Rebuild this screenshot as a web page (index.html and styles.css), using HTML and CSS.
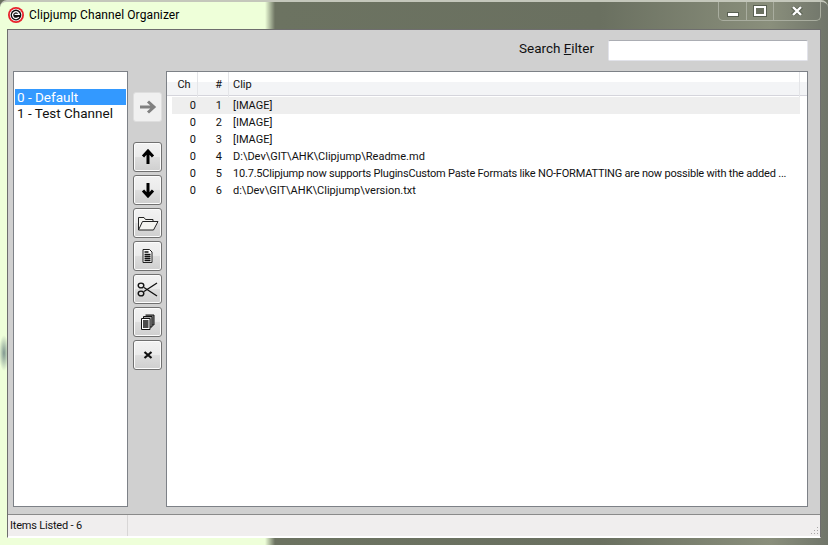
FILE: index.html
```html
<!DOCTYPE html>
<html lang="en">
<head>
    <meta charset="UTF-8">
    <title>Clipjump Channel Organizer</title>
    <link rel="stylesheet" href="styles.css">
</head>
<body>
    <div class="window">
        <div class="titlebar">
            <svg class="app-icon" width="16" height="16" viewBox="0 0 16 16">
                <circle cx="8" cy="8" r="8" fill="#e8222c"/>
                <circle cx="8" cy="8" r="6.2" fill="#fff"/>
                <circle cx="8" cy="8" r="5.4" fill="#111"/>
                <path d="M10.8 10A3.4 3.4 0 1 1 11.3 7.4H6.6" fill="none" stroke="#fff" stroke-width="1.3"/>
            </svg>
            <span class="title">Clipjump Channel Organizer</span>
            <div class="caption-buttons">
                <div class="cap-btn cap-min"><span class="min-bar"></span></div>
                <div class="cap-btn cap-max"><span class="max-box"></span></div>
                <div class="cap-btn cap-close">
                    <svg width="12" height="10" viewBox="0 0 12 10">
                        <path d="M1.5 1L10.5 9M10.5 1L1.5 9" stroke="#596052" stroke-width="4"/>
                        <path d="M2 1L10 9M10 1L2 9" stroke="#fff" stroke-width="2.4"/>
                    </svg>
                </div>
            </div>
        </div>

        <div class="client">
            <div class="search-row">
                <label class="search-label">Search <u>F</u>ilter</label>
                <input type="text" class="search-input">
            </div>

            <div class="main">
                <div class="channel-list">
                    <div class="channel selected">0 - Default</div>
                    <div class="channel">1 - Test Channel</div>
                </div>

                <div class="tools">
                    <button class="tool disabled">
                        <svg width="18" height="14" viewBox="0 0 18 14"><path d="M1 7H14M9 1.5L15 7L9 12.5" fill="none" stroke="#808080" stroke-width="3"/></svg>
                    </button>
                    <div class="spacer"></div>
                    <button class="tool">
                        <svg width="14" height="16" viewBox="0 0 14 16"><path d="M7 15V3M2 7.5L7 2L12 7.5" fill="none" stroke="#000" stroke-width="3"/></svg>
                    </button>
                    <button class="tool">
                        <svg width="14" height="16" viewBox="0 0 14 16"><path d="M7 1V13M2 8.5L7 14L12 8.5" fill="none" stroke="#000" stroke-width="3"/></svg>
                    </button>
                    <button class="tool">
                        <svg width="22" height="15" viewBox="0 0 22 15"><path d="M1.5 14V1.5H7L8.5 3.5H16V5.5M1.5 14L5.5 5.5H21L16.5 14Z" fill="#f4f4f0" stroke="#222" stroke-width="1"/></svg>
                    </button>
                    <button class="tool">
                        <svg width="11" height="14" viewBox="0 0 11 14"><path d="M1 .5H7.5L10 3V13.5H1Z" fill="#fff" stroke="#222"/><path d="M2.5 3H6.5M2.5 5.5H8.5M2.5 7.5H8.5M2.5 9.5H8.5M2.5 11.5H8.5" stroke="#111" stroke-width="1.3"/></svg>
                    </button>
                    <button class="tool">
                        <svg width="21" height="17" viewBox="0 0 21 17"><path d="M7 6.5L20 15M7 10.5L20 2" stroke="#111" stroke-width="1.3"/><ellipse cx="4" cy="4.5" rx="2.8" ry="2.4" fill="none" stroke="#111" stroke-width="1.4"/><ellipse cx="4" cy="12.5" rx="2.8" ry="2.4" fill="none" stroke="#111" stroke-width="1.4"/></svg>
                    </button>
                    <button class="tool">
                        <svg width="14" height="16" viewBox="0 0 14 16"><path d="M4.5 1H13V11H10" fill="#888" stroke="#111"/><path d="M2.5 2.5H11V13H2.5Z" fill="#aaa" stroke="#111"/><path d="M.5 4.5H9V15.5H.5Z" fill="#fff" stroke="#111"/><path d="M2 7H7.5M2 9H7.5M2 11H7.5M2 13H7.5" stroke="#111" stroke-width="1.3"/></svg>
                    </button>
                    <button class="tool">
                        <svg width="10" height="8" viewBox="0 0 10 8"><path d="M1.5 1L8.5 7M8.5 1L1.5 7" stroke="#111" stroke-width="2.2"/></svg>
                    </button>
                </div>

                <div class="clips">
                    <div class="clips-head">
                        <div class="head-cell head-ch">Ch</div>
                        <div class="head-cell head-num">#</div>
                        <div class="head-cell head-clip">Clip</div>
                    </div>
                    <div class="clip-rows">
                        <div class="clip-row focused"><span class="col-ch">0</span><span class="col-num">1</span><span class="col-clip">[IMAGE]</span></div>
                        <div class="clip-row"><span class="col-ch">0</span><span class="col-num">2</span><span class="col-clip">[IMAGE]</span></div>
                        <div class="clip-row"><span class="col-ch">0</span><span class="col-num">3</span><span class="col-clip">[IMAGE]</span></div>
                        <div class="clip-row"><span class="col-ch">0</span><span class="col-num">4</span><span class="col-clip">D:\Dev\GIT\AHK\Clipjump\Readme.md</span></div>
                        <div class="clip-row"><span class="col-ch">0</span><span class="col-num">5</span><span class="col-clip long">10.7.5Clipjump now supports PluginsCustom Paste Formats like NO-FORMATTING are now possible with the added ...</span></div>
                        <div class="clip-row"><span class="col-ch">0</span><span class="col-num">6</span><span class="col-clip">d:\Dev\GIT\AHK\Clipjump\version.txt</span></div>
                    </div>
                </div>
            </div>

            <div class="statusbar">
                <div class="status-cell">Items Listed - 6</div>
                <div class="status-rest">
                    <svg class="grip" width="9" height="9" viewBox="0 0 9 9"><path d="M7 1h1v1H7zM4 4h1v1H4zM7 4h1v1H7zM1 7h1v1H1zM4 7h1v1H4zM7 7h1v1H7z" fill="#a8a6a6"/></svg>
                </div>
            </div>
        </div>
    </div>
</body>
</html>
```

FILE: styles.css
```css
* {
    box-sizing: border-box;
}
body {
    margin: 0;
    background-color: #6a7060;
    font-family: Roboto, "Noto Sans", sans-serif;
    color: #111;
    overflow: hidden;
}
.window {
    width: 828px;
    height: 545px;
    display: flex;
    flex-direction: column;
    border-radius: 7px 7px 0 0;
    border-top: 2px solid #c4c7bb;
    background:
        radial-gradient(ellipse 5px 18px at 4px 351px, #80978f 0%, rgba(128, 151, 143, 0) 100%),
        linear-gradient(90deg, #eeffd9 0, #eeffd9 265px, #6c7361 275px, #6a7060 600px, #8a8f7c 770px, #70756a 828px);
}
.titlebar {
    height: 27px;
    flex: none;
    display: flex;
    align-items: flex-start;
    padding-left: 8px;
}
.app-icon {
    margin-top: 5px;
}
.title {
    margin-left: 5px;
    margin-top: 5px;
    font-size: 12px;
    letter-spacing: 0.1px;
    line-height: 17px;
    color: #000;
}
.caption-buttons {
    margin-left: auto;
    margin-right: 7px;
    width: 103px;
    height: 19px;
    display: flex;
    border: 1px solid #a9ad9f;
    border-top: none;
    border-radius: 0 0 5px 5px;
}
.cap-btn {
    display: flex;
    align-items: center;
    justify-content: center;
    border-right: 1px solid #a9ad9f;
}
.cap-min {
    width: 28px;
    padding-top: 6px;
}
.cap-max {
    width: 27px;
}
.cap-close {
    flex: 1;
    border-right: none;
}
.min-bar {
    width: 12px;
    height: 5px;
    background-color: #fff;
    border: 1px solid #596052;
    background-clip: padding-box;
}
.max-box {
    width: 12px;
    height: 10px;
    border: 2px solid #fff;
    outline: 1px solid #596052;
    background-color: #6b7161;
}
.client {
    flex: 1;
    margin: 0 7px 7px;
    display: flex;
    flex-direction: column;
    background-color: #d0d0d0;
    border: 1px solid #6e6e6e;
    border-bottom-color: #fff;
    min-height: 0;
}
.search-row {
    height: 41px;
    flex: none;
    display: flex;
    align-items: flex-start;
    justify-content: flex-end;
    padding: 10px 12px 0 0;
}
.search-label {
    font-size: 13.5px;
    line-height: 17px;
    margin-right: 14px;
}
.search-input {
    width: 200px;
    height: 21px;
    border: 1px solid #e2e3ea;
    border-top-color: #abadb3;
    border-radius: 2px;
    background-color: #fff;
    padding: 0;
}
.main {
    flex: 1;
    display: flex;
    padding: 0 12px 7px 5px;
    min-height: 0;
}
.channel-list {
    width: 115px;
    background-color: #fff;
    border: 1px solid #7d8187;
    padding: 17px 1px 0;
}
.channel {
    height: 16px;
    font-size: 13.5px;
    line-height: 17px;
    padding-left: 2px;
    white-space: nowrap;
}
.channel.selected {
    background-color: #3399ff;
    color: #fff;
}
.tools {
    width: 29px;
    margin: 0 4px 0 5px;
    padding-top: 21px;
    display: flex;
    flex-direction: column;
    gap: 3px;
}
.spacer {
    height: 14px;
}
.tool {
    width: 29px;
    height: 30px;
    padding: 0;
    display: flex;
    align-items: center;
    justify-content: center;
    border: 1px solid #707070;
    border-radius: 3px;
    box-shadow: inset 0 0 0 1px #fcfcfc;
    background: linear-gradient(#f2f2f2 0, #ebebeb 48%, #dddddd 52%, #cfcfcf 100%);
}
.tool.disabled {
    border-color: #dedede;
    background: #f0f0f0;
    box-shadow: none;
}
.clips {
    flex: 1;
    background-color: #fff;
    border: 1px solid #7d8187;
    display: flex;
    flex-direction: column;
    min-width: 0;
}
.clips-head {
    height: 24px;
    flex: none;
    display: grid;
    grid-template-columns: 31px 31px 571px 1fr;
    background: linear-gradient(#fff 0, #fff 10px, #f3f4f6 10px, #f3f4f6 100%);
    border-bottom: 1px solid #d5d5dc;
    font-size: 11px;
}
.head-cell {
    line-height: 26px;
    border-right: 1px solid #e4e5e8;
}
.head-ch {
    text-align: center;
    padding-left: 4px;
}
.head-num {
    text-align: right;
    padding-right: 6px;
}
.head-clip {
    padding-left: 4px;
}
.clip-rows {
    padding: 1px 7px 0 5px;
}
.clip-row {
    height: 17px;
    display: grid;
    grid-template-columns: 25px 31px 1fr;
    font-size: 11px;
    line-height: 18px;
    white-space: nowrap;
}
.clip-row.focused {
    background-color: #eeeeee;
}
.col-ch {
    text-align: right;
    padding-right: 1px;
}
.col-num {
    text-align: right;
    padding-right: 6px;
}
.col-clip {
    padding-left: 5px;
    overflow: hidden;
}
.col-clip.long {
    letter-spacing: -0.2px;
}
.statusbar {
    height: 23px;
    flex: none;
    display: flex;
    background-color: #f0eeee;
    border-top: 1px solid #8a8a8a;
    border-bottom: 1px solid #fff;
}
.status-cell {
    width: 120px;
    padding-left: 2px;
    font-size: 11px;
    letter-spacing: -0.2px;
    line-height: 21px;
    border-right: 1px solid #d8d6d6;
}
.status-rest {
    flex: 1;
    display: flex;
    justify-content: flex-end;
    align-items: flex-end;
}
.grip {
    margin: 0 1px 1px 0;
}
```
